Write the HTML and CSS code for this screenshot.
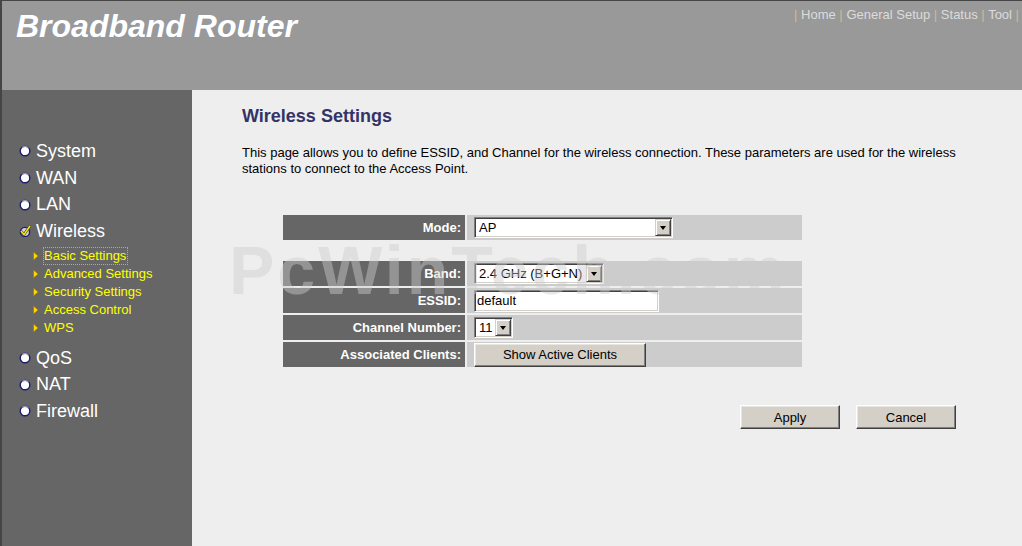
FILE: index.html
```html
<!DOCTYPE html>
<html lang="en">
<head>
<meta charset="utf-8">
<title>Broadband Router - Wireless Settings</title>
<link rel="stylesheet" href="styles.css">
</head>
<body>
<div class="page">
  <header class="topbar">
    <h1 class="brand">Broadband Router</h1>
    <nav class="toplinks">
      <span class="sep">|</span> <a href="#">Home</a> <span class="sep">|</span> <a href="#">General Setup</a> <span class="sep">|</span> <a href="#">Status</a> <span class="sep">|</span> <a href="#">Tool</a> <span class="sep">|</span>
    </nav>
  </header>
  <div class="main">
    <aside class="sidebar">
      <ul class="menu">
        <li class="menu-item"><svg class="bullet" viewBox="0 0 12 12" width="12" height="12"><circle cx="6" cy="6" r="4.8" fill="#fff" stroke="#1d1d70" stroke-width="1.4"/><path d="M3 2.6 A4.8 4.8 0 0 1 9.4 3" fill="none" stroke="#9a9ab0" stroke-width="1.2"/></svg><span>System</span></li>
        <li class="menu-item"><svg class="bullet" viewBox="0 0 12 12" width="12" height="12"><circle cx="6" cy="6" r="4.8" fill="#fff" stroke="#1d1d70" stroke-width="1.4"/><path d="M3 2.6 A4.8 4.8 0 0 1 9.4 3" fill="none" stroke="#9a9ab0" stroke-width="1.2"/></svg><span>WAN</span></li>
        <li class="menu-item"><svg class="bullet" viewBox="0 0 12 12" width="12" height="12"><circle cx="6" cy="6" r="4.8" fill="#fff" stroke="#1d1d70" stroke-width="1.4"/><path d="M3 2.6 A4.8 4.8 0 0 1 9.4 3" fill="none" stroke="#9a9ab0" stroke-width="1.2"/></svg><span>LAN</span></li>
        <li class="menu-item open">
          <div class="menu-head"><svg class="bullet" viewBox="0 0 12 12" width="12" height="12"><circle cx="6" cy="7" r="4.6" fill="#d0d0d8" stroke="#1d1d70" stroke-width="1.4"/><path d="M2.3 6.6 L5 9.6 L10.8 1.2" fill="none" stroke="#333" stroke-width="2.6" stroke-linecap="round" stroke-linejoin="round"/><path d="M2.3 6.6 L5 9.6 L10.8 1.2" fill="none" stroke="#ffee00" stroke-width="1.5" stroke-linecap="round" stroke-linejoin="round"/></svg><span>Wireless</span></div>
          <ul class="submenu">
            <li><svg class="tri" viewBox="0 0 6 10" width="6" height="10"><polygon points="0.5,1 5.2,5 0.5,9" fill="#ffd800" stroke="#a07800" stroke-width="0.8"/></svg><a href="#" class="focused">Basic Settings</a></li>
            <li><svg class="tri" viewBox="0 0 6 10" width="6" height="10"><polygon points="0.5,1 5.2,5 0.5,9" fill="#ffd800" stroke="#a07800" stroke-width="0.8"/></svg><a href="#">Advanced Settings</a></li>
            <li><svg class="tri" viewBox="0 0 6 10" width="6" height="10"><polygon points="0.5,1 5.2,5 0.5,9" fill="#ffd800" stroke="#a07800" stroke-width="0.8"/></svg><a href="#">Security Settings</a></li>
            <li><svg class="tri" viewBox="0 0 6 10" width="6" height="10"><polygon points="0.5,1 5.2,5 0.5,9" fill="#ffd800" stroke="#a07800" stroke-width="0.8"/></svg><a href="#">Access Control</a></li>
            <li><svg class="tri" viewBox="0 0 6 10" width="6" height="10"><polygon points="0.5,1 5.2,5 0.5,9" fill="#ffd800" stroke="#a07800" stroke-width="0.8"/></svg><a href="#">WPS</a></li>
          </ul>
        </li>
        <li class="menu-item after-sub"><svg class="bullet" viewBox="0 0 12 12" width="12" height="12"><circle cx="6" cy="6" r="4.8" fill="#fff" stroke="#1d1d70" stroke-width="1.4"/><path d="M3 2.6 A4.8 4.8 0 0 1 9.4 3" fill="none" stroke="#9a9ab0" stroke-width="1.2"/></svg><span>QoS</span></li>
        <li class="menu-item"><svg class="bullet" viewBox="0 0 12 12" width="12" height="12"><circle cx="6" cy="6" r="4.8" fill="#fff" stroke="#1d1d70" stroke-width="1.4"/><path d="M3 2.6 A4.8 4.8 0 0 1 9.4 3" fill="none" stroke="#9a9ab0" stroke-width="1.2"/></svg><span>NAT</span></li>
        <li class="menu-item"><svg class="bullet" viewBox="0 0 12 12" width="12" height="12"><circle cx="6" cy="6" r="4.8" fill="#fff" stroke="#1d1d70" stroke-width="1.4"/><path d="M3 2.6 A4.8 4.8 0 0 1 9.4 3" fill="none" stroke="#9a9ab0" stroke-width="1.2"/></svg><span>Firewall</span></li>
      </ul>
    </aside>
    <main class="content">
      <h2 class="title">Wireless Settings</h2>
      <p class="intro">This page allows you to define ESSID, and Channel for the wireless connection. These parameters are used for the wireless stations to connect to the Access Point.</p>
      <div class="form">
        <div class="form-row mode-row">
          <div class="label">Mode:</div>
          <div class="value">
            <span class="select sel-mode"><select><option>AP</option></select><span class="arrow-btn"></span></span>
          </div>
        </div>
        <div class="form-row">
          <div class="label">Band:</div>
          <div class="value">
            <span class="select sel-band"><select><option>2.4 GHz (B+G+N)</option></select><span class="arrow-btn"></span></span>
          </div>
        </div>
        <div class="form-row">
          <div class="label">ESSID:</div>
          <div class="value"><input class="text-input" type="text" value="default"></div>
        </div>
        <div class="form-row">
          <div class="label">Channel Number:</div>
          <div class="value">
            <span class="select sel-chan"><select><option>11</option></select><span class="arrow-btn"></span></span>
          </div>
        </div>
        <div class="form-row">
          <div class="label">Associated Clients:</div>
          <div class="value"><button class="btn btn-clients" type="button">Show Active Clients</button></div>
        </div>
      </div>
      <div class="actions">
        <button class="btn btn-action" type="button">Apply</button>
        <button class="btn btn-action" type="button">Cancel</button>
      </div>
      <div class="watermark" aria-hidden="true">PcWinTech.com</div>
    </main>
  </div>
</div>
</body>
</html>
```
FILE: styles.css
```css
html, body {
  margin: 0;
  padding: 0;
  height: 100%;
}

body {
  font-family: "Liberation Sans", Arial, sans-serif;
  background: #eeeeee;
  overflow: hidden;
}

.page {
  height: 100vh;
  box-sizing: border-box;
  border-top: 1px solid #454545;
  border-left: 2px solid #454545;
  display: flex;
  flex-direction: column;
}

/* ---------- header ---------- */
.topbar {
  height: 89px;
  flex: none;
  background: #999999;
  display: flex;
  justify-content: space-between;
  align-items: flex-start;
  padding: 0 3px 0 14px;
}

.brand {
  margin: 9px 0 0;
  font-size: 32px;
  line-height: 32px;
  font-style: italic;
  font-weight: bold;
  color: #ffffff;
  text-shadow: -1px 0 0 rgba(120, 150, 220, 0.35);
}

.toplinks {
  margin-top: 6px;
  font-size: 13px;
  line-height: 16px;
  color: #dddddd;
  white-space: nowrap;
}

.toplinks a {
  color: #dcdcdc;
  text-decoration: none;
}

.toplinks .sep {
  color: #c6bd9c;
}

/* ---------- body ---------- */
.main {
  flex: 1;
  display: flex;
  min-height: 0;
}

.sidebar {
  width: 190px;
  flex: none;
  background: #666666;
  padding: 48px 0 0 17px;
  box-sizing: border-box;
}

.menu {
  list-style: none;
  margin: 0;
  padding: 0;
}

.menu-item,
.menu-head {
  display: flex;
  align-items: center;
  font-size: 18px;
  line-height: 26.7px;
  color: #ffffff;
}

.menu-item.open {
  display: block;
}

.menu-item.after-sub {
  margin-top: 7.7px;
}

.bullet {
  flex: none;
  margin-right: 5px;
}

.submenu {
  list-style: none;
  margin: 2px 0 0;
  padding: 0 0 0 14px;
}

.submenu li {
  display: flex;
  align-items: center;
  font-size: 13px;
  line-height: 18px;
}

.tri {
  flex: none;
  margin-right: 4px;
}

.submenu a {
  color: #ffff00;
  text-decoration: none;
  padding: 0 1px;
}

.submenu a.focused {
  outline: 1px dotted #aaaaaa;
  outline-offset: -1px;
  padding: 0 2px 0 1px;
}

/* ---------- content ---------- */
.content {
  flex: 1;
  position: relative;
  background: #eeeeee;
  padding: 15px 40px 0 50px;
}

.title {
  margin: 0;
  font-size: 18px;
  line-height: 22px;
  font-weight: bold;
  color: #333366;
}

.intro {
  margin: 18px 0 0;
  font-size: 13px;
  line-height: 16px;
  color: #000000;
}

.form {
  margin: 38px 0 0 41px;
  width: 519px;
  display: flex;
  flex-direction: column;
  gap: 2px;
}

.form-row {
  display: grid;
  grid-template-columns: 182px 335px;
  column-gap: 2px;
  height: 25px;
}

.form-row.mode-row {
  margin-bottom: 19px;
}

.label {
  background: #666666;
  color: #ffffff;
  font-weight: bold;
  font-size: 13px;
  text-align: right;
  padding-right: 4px;
  display: flex;
  align-items: center;
  justify-content: flex-end;
}

.value {
  background: #cccccc;
  padding-left: 7px;
  display: flex;
  align-items: center;
}

/* classic sunken controls */
.select,
.text-input {
  box-sizing: border-box;
  background: #ffffff;
  border: 1px solid;
  border-color: #808080 #ffffff #ffffff #808080;
  box-shadow: inset 1px 1px 0 #404040, inset -1px -1px 0 #d4d0c8;
}

.select {
  display: inline-flex;
  align-items: stretch;
  height: 21px;
  padding: 1px;
}

.select select {
  appearance: none;
  -webkit-appearance: none;
  border: 0;
  background: transparent;
  font-family: "Liberation Sans", Arial, sans-serif;
  font-size: 13px;
  color: #000000;
  padding: 0 0 0 3px;
  margin: 0;
  flex: 1;
  min-width: 0;
  outline: none;
}

.arrow-btn {
  flex: none;
  width: 16px;
  box-sizing: border-box;
  background: #d4d0c8;
  border: 1px solid;
  border-color: #d4d0c8 #404040 #404040 #d4d0c8;
  box-shadow: inset 1px 1px 0 #ffffff, inset -1px -1px 0 #808080;
  display: flex;
  align-items: center;
  justify-content: center;
}

.arrow-btn::after {
  content: "";
  width: 0;
  height: 0;
  border-left: 3.5px solid transparent;
  border-right: 3.5px solid transparent;
  border-top: 4px solid #000000;
  margin-top: 1px;
}

.sel-mode { width: 199px; }
.sel-band { width: 130px; }
.sel-chan { width: 39px; }

.text-input {
  width: 185px;
  height: 22px;
  padding: 0 2px;
  font-family: "Liberation Sans", Arial, sans-serif;
  font-size: 13px;
  color: #000000;
  outline: none;
}

.btn {
  box-sizing: border-box;
  background: #d4d0c8;
  border: 1px solid;
  border-color: #ffffff #404040 #404040 #ffffff;
  box-shadow: inset -1px -1px 0 #808080, inset 1px 1px 0 #e8e6e0;
  font-family: "Liberation Sans", Arial, sans-serif;
  font-size: 13px;
  color: #000000;
  padding: 0;
  margin: 0;
}

.btn-clients {
  width: 172px;
  height: 24px;
}

.actions {
  margin-top: 38px;
  width: 714px;
  display: flex;
  justify-content: flex-end;
  gap: 16px;
}

.btn-action {
  width: 100px;
  height: 24px;
}

/* watermark lies over the page content */
.watermark {
  position: absolute;
  left: 37px;
  top: 146px;
  font-size: 68px;
  line-height: 68px;
  font-weight: bold;
  letter-spacing: 3px;
  color: rgba(205, 205, 205, 0.45);
  pointer-events: none;
  white-space: nowrap;
}
```
